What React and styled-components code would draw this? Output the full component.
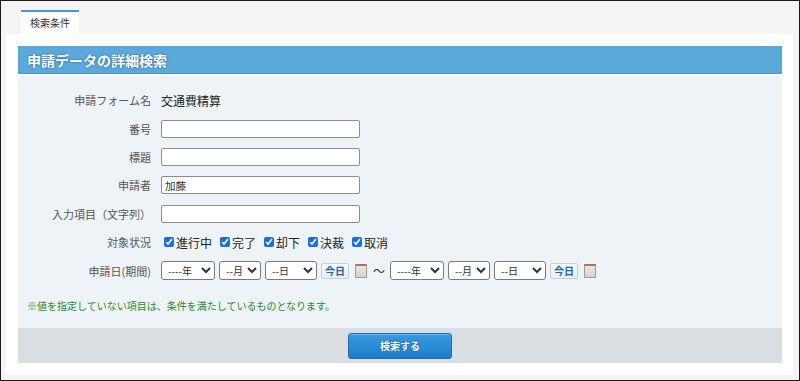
import React from "react";
import styled, { createGlobalStyle } from "styled-components";

const Global = createGlobalStyle`
  html, body { margin: 0; padding: 0; }
  body { font-family: "Noto Sans CJK JP", "Noto Sans", sans-serif; }
  * { box-sizing: border-box; }
`;

const Page = styled.div`
  width: 800px;
  height: 381px;
  border: 1px solid #1a1a1a;
  background: #f4f4f4;
  display: flex;
  flex-direction: column;
`;

const TabBar = styled.div`
  display: flex;
  padding: 9px 0 0 20px;
`;

const Tab = styled.div`
  width: 58px;
  height: 24px;
  border-top: 2px solid #3b9ad9;
  background: #fff;
  font-size: 10px;
  color: #333;
  display: flex;
  align-items: center;
  justify-content: center;
  padding-bottom: 1px;
`;

const Card = styled.div`
  flex: 1;
  margin: 0 6px 5px 5px;
  background: #fff;
  border-radius: 0 4px 4px 4px;
  padding: 12px 11px 12px 12px;
  display: flex;
  flex-direction: column;
`;

const Header = styled.div`
  height: 28px;
  background: #5ba8da;
  border-bottom: 1px solid #4b98cd;
  margin-bottom: 2px;
  color: #fff;
  font-size: 14px;
  font-weight: bold;
  display: flex;
  align-items: center;
  padding-left: 9px;
  text-shadow: 0 0 2px rgba(0, 50, 110, 0.7);
`;

const Body = styled.div`
  background: #eef3f7;
  padding: 10px 0 15px 0;
`;

const Form = styled.div`
  display: grid;
  grid-template-columns: 133px 1fr;
  grid-auto-rows: 28.4px;
  column-gap: 10px;
  align-items: center;
`;

const Label = styled.div`
  text-align: right;
  font-size: 11px;
  color: #555;
  white-space: nowrap;
`;

const Value = styled.div`
  font-size: 12px;
  color: #222;
`;

const Field = styled.div`
  display: flex;
  align-items: center;
`;

const TextInput = styled.input`
  width: 199px;
  height: 18px;
  border: 1px solid #8d8d8d;
  border-radius: 2px;
  background: #fff;
  font-family: inherit;
  font-size: 10.5px;
  color: #333;
  padding: 0 3px;
  outline: none;
`;

const Checks = styled.div`
  display: flex;
  align-items: center;
  gap: 5px;
`;

const CheckLabel = styled.label`
  display: flex;
  align-items: center;
  font-size: 12px;
  color: #222;
  input {
    width: 10px;
    height: 10px;
    margin: 0 2px 0 3px;
    accent-color: #1a6fe0;
  }
`;

const DateRow = styled.div`
  display: flex;
  align-items: center;
`;

const Select = styled.select`
  width: ${(p) => p.$w}px;
  height: 19px;
  margin-right: 4px;
  font-family: inherit;
  font-size: 10px;
  color: #333;
  border: 1px solid #7a7a7a;
  border-radius: 3px;
  background: #fff;
  padding: 0 2px;
`;

const TodayButton = styled.button`
  width: 28px;
  height: 16px;
  padding: 0;
  border: 1px solid #c5ced8;
  border-radius: 2px;
  background: linear-gradient(#f8fafc, #e8eef4);
  color: #1763b8;
  font-family: inherit;
  font-size: 10px;
  font-weight: bold;
  line-height: 14px;
  margin-right: 6px;
`;

const CalIcon = styled.span`
  display: inline-block;
  width: 12px;
  height: 14px;
  border: 1px solid #a59a92;
  border-top: 2px solid #b0705c;
  background: linear-gradient(#e8e6e2, #d6d3ce);
  margin-right: ${(p) => p.$mr || 0}px;
`;

const Tilde = styled.span`
  font-size: 12px;
  color: #333;
  margin-right: 5px;
`;

const Note = styled.div`
  margin-top: 14px;
  padding-left: 9px;
  font-size: 10px;
  line-height: 14px;
  color: #2b8a2b;
`;

const Footer = styled.div`
  height: 35px;
  background: #d9dee2;
  display: flex;
  justify-content: center;
  padding-top: 5px;
`;

const SearchButton = styled.button`
  width: 104px;
  height: 26px;
  border: 1px solid #1b6db3;
  border-radius: 3px;
  background: linear-gradient(#3a9be0, #1b7ccc);
  color: #fff;
  font-family: inherit;
  font-size: 10px;
  font-weight: bold;
  text-shadow: 0 0 2px rgba(0, 40, 90, 0.6);
  box-shadow: inset 0 1px 0 rgba(255, 255, 255, 0.25);
`;

function DateGroup({ last }) {
  return (
    <>
      <Select $w={54} defaultValue="">
        <option value="">----年</option>
      </Select>
      <Select $w={42} defaultValue="">
        <option value="">--月</option>
      </Select>
      <Select $w={52} defaultValue="">
        <option value="">--日</option>
      </Select>
      <TodayButton type="button">今日</TodayButton>
      <CalIcon $mr={last ? 0 : 6} />
    </>
  );
}

export default function App() {
  const statuses = ["進行中", "完了", "却下", "決裁", "取消"];
  return (
    <>
      <Global />
      <Page>
        <TabBar>
          <Tab>検索条件</Tab>
        </TabBar>
        <Card>
          <Header>申請データの詳細検索</Header>
          <Body>
            <Form>
              <Label>申請フォーム名</Label>
              <Value>交通費精算</Value>
              <Label>番号</Label>
              <Field>
                <TextInput type="text" />
              </Field>
              <Label>標題</Label>
              <Field>
                <TextInput type="text" />
              </Field>
              <Label>申請者</Label>
              <Field>
                <TextInput type="text" defaultValue="加藤" />
              </Field>
              <Label>入力項目（文字列）</Label>
              <Field>
                <TextInput type="text" />
              </Field>
              <Label>対象状況</Label>
              <Checks>
                {statuses.map((s) => (
                  <CheckLabel key={s}>
                    <input type="checkbox" defaultChecked />
                    {s}
                  </CheckLabel>
                ))}
              </Checks>
              <Label>申請日(期間)</Label>
              <DateRow>
                <DateGroup />
                <Tilde>〜</Tilde>
                <DateGroup last />
              </DateRow>
            </Form>
            <Note>※値を指定していない項目は、条件を満たしているものとなります。</Note>
          </Body>
          <Footer>
            <SearchButton type="button">検索する</SearchButton>
          </Footer>
        </Card>
      </Page>
    </>
  );
}
